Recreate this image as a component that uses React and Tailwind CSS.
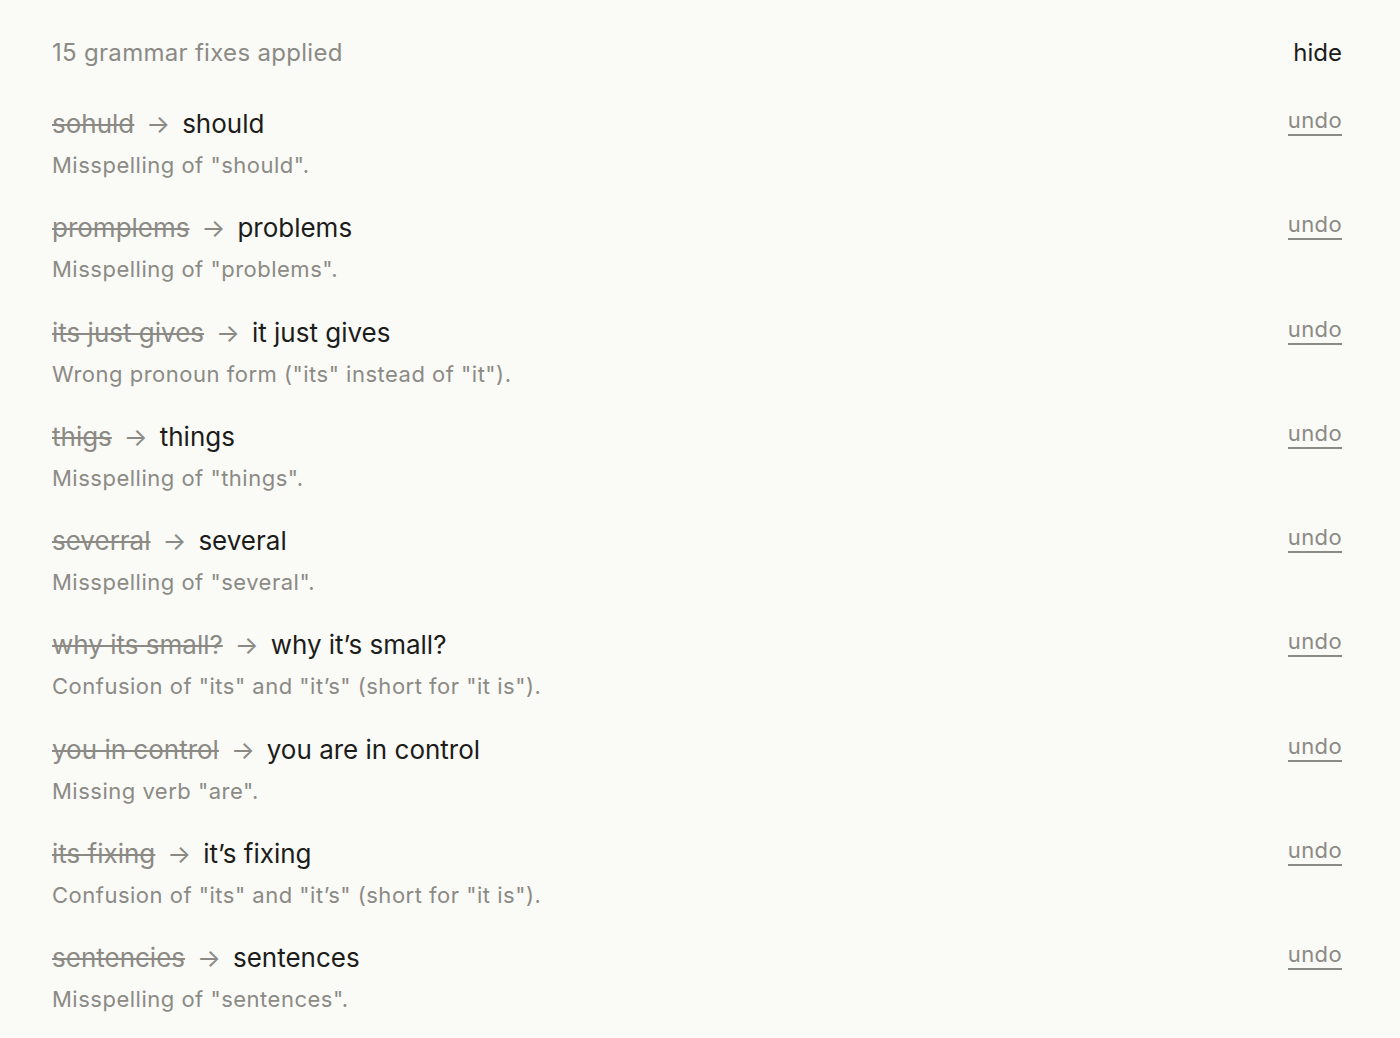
import React, { useState } from 'react';

const fixes = [
  { from: 'sohuld', to: 'should', note: 'Misspelling of "should".' },
  { from: 'promplems', to: 'problems', note: 'Misspelling of "problems".' },
  { from: 'its just gives', to: 'it just gives', note: 'Wrong pronoun form ("its" instead of "it").' },
  { from: 'thigs', to: 'things', note: 'Misspelling of "things".' },
  { from: 'severral', to: 'several', note: 'Misspelling of "several".' },
  { from: 'why its small?', to: 'why it\u2019s small?', note: 'Confusion of "its" and "it\u2019s" (short for "it is").' },
  { from: 'you in control', to: 'you are in control', note: 'Missing verb "are".' },
  { from: 'its fixing', to: 'it\u2019s fixing', note: 'Confusion of "its" and "it\u2019s" (short for "it is").' },
  { from: 'sentencies', to: 'sentences', note: 'Misspelling of "sentences".' },
];

const FixRow = ({ fix }) => (
  <div className="flex items-start justify-between">
    <div>
      <div className="flex items-center gap-[12px] text-[26px] leading-[34px]">
        <span className="text-[#8b8a85] line-through decoration-[2px] decoration-[#8b8a85]">{fix.from}</span>
        <span className="text-[#8b8a85] text-[25px]">→</span>
        <span className="text-[#1c1c1a]">{fix.to}</span>
      </div>
      <p className="mt-[7px] text-[22px] leading-[34px] tracking-[0.5px] text-[#8b8a85]">{fix.note}</p>
    </div>
    <button className="mt-[1px] pb-[2px] text-[22px] leading-[24px] tracking-[0.4px] text-[#8b8a85] border-b-2 border-[#8b8a85]">
      undo
    </button>
  </div>
);

export default function App() {
  const [hidden, setHidden] = useState(false);

  return (
    <div className="min-h-screen bg-[#fafaf7] pl-[52px] pr-[58px] pt-[37px] font-['Inter','Noto_Sans',sans-serif] antialiased">
      <div className="flex items-center justify-between text-[24px] leading-[32px]">
        <span className="text-[#8b8a85] tracking-[0.3px]">15 grammar fixes applied</span>
        <button onClick={() => setHidden(!hidden)} className="text-[#1c1c1a]">
          {hidden ? 'show' : 'hide'}
        </button>
      </div>
      {!hidden && (
        <div className="mt-[38px] flex flex-col gap-[29.25px]">
          {fixes.map((fix, i) => (
            <FixRow key={i} fix={fix} />
          ))}
        </div>
      )}
    </div>
  );
}
